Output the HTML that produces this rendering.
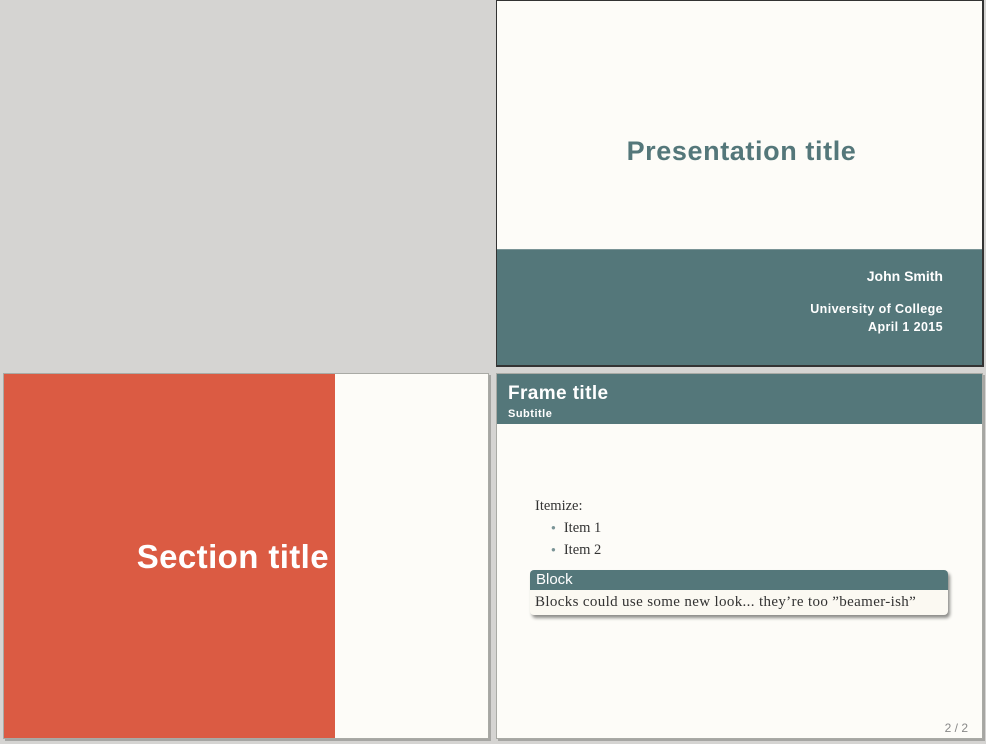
<!DOCTYPE html>
<html><head><style>
body{margin:0;width:986px;height:744px;background:#d5d4d2;position:relative;overflow:hidden;font-family:"Liberation Sans",sans-serif}
.s{position:absolute;background:#fdfcf8;box-sizing:border-box}
.t{position:absolute;color:#fff;font-weight:bold}
</style></head><body>
<!-- slide 1 -->
<div class="s" style="left:496px;top:0;width:488px;height:367px;border:1px solid #333;border-right-width:2px;border-bottom-width:2px">
  <div class="t" style="left:0;right:0;top:135px;text-align:center;padding-left:4px;color:#54777a;font-size:27px;letter-spacing:0.6px">Presentation title</div>
  <div style="position:absolute;left:0;right:0;top:248px;bottom:0;background:#54777a;border-top:1px solid #7a9496"></div>
  <div class="t" style="right:39px;top:267px;font-size:14px">John Smith</div>
  <div class="t" style="right:39px;top:299px;font-size:12.5px;letter-spacing:0.4px;text-align:right;line-height:18px">University of College<br>April 1 2015</div>
</div>
<!-- slide 2 -->
<div class="s" style="left:3px;top:373px;width:486px;height:366px;border:1px solid #a9aaa5;box-shadow:2px 2px 0 #a6a6a3">
  <div style="position:absolute;left:0;top:0;width:331px;bottom:0;background:#db5b43"></div>
  <div class="t" style="right:159px;top:164px;font-size:33px;letter-spacing:0.4px">Section title</div>
</div>
<!-- slide 3 -->
<div class="s" style="left:496px;top:373px;width:487px;height:366px;border:1px solid #a9aaa5;box-shadow:2px 2px 0 #a6a6a3">
  <div style="position:absolute;left:0;right:0;top:0;height:50px;background:#54777a"></div>
  <div class="t" style="left:11px;top:9px;font-size:19px;letter-spacing:0.4px">Frame title</div>
  <div class="t" style="left:11px;top:34px;font-size:11px;letter-spacing:0.5px">Subtitle</div>
  <div style="position:absolute;left:38px;top:121px;font-family:'Liberation Serif',serif;font-size:14.5px;color:#333;line-height:22px">Itemize:<br>
  <span style="color:#7a9496;font-size:8px;margin:0 8px 0 16px;vertical-align:2px">&#9679;</span>Item 1<br>
  <span style="color:#7a9496;font-size:8px;margin:0 8px 0 16px;vertical-align:2px">&#9679;</span>Item 2</div>
  <div style="position:absolute;left:33px;top:196px;width:418px;height:45px;border-radius:4px;background:#fbf9f2;box-shadow:2px 3px 3px #8d8d8a;overflow:hidden">
    <div style="height:20px;background:#54777a;color:#fff;font-size:15px;line-height:20px;padding-left:6px">Block</div>
    <div style="font-family:'Liberation Serif',serif;font-size:15px;letter-spacing:0.35px;color:#333;padding-left:5px;line-height:24px;white-space:nowrap">Blocks could use some new look... they’re too ”beamer-ish”</div>
  </div>
  <div style="position:absolute;right:14px;bottom:3px;font-size:12px;color:#888">2 / 2</div>
</div>
</body></html>
